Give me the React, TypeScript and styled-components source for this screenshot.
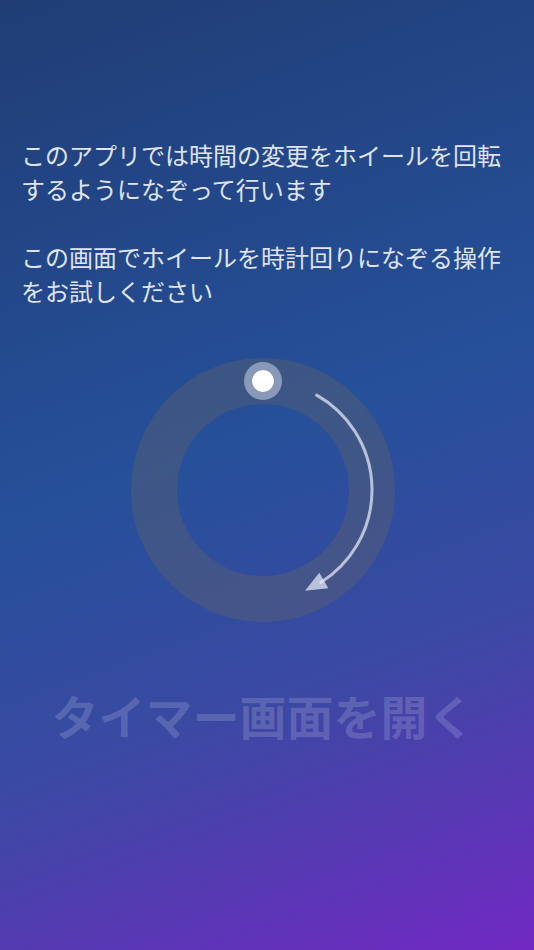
import { createGlobalStyle, styled } from "styled-components";

const GlobalStyle = createGlobalStyle`
  html, body {
    margin: 0;
    padding: 0;
  }
  body {
    font-family: "Noto Sans CJK JP", "Noto Sans", sans-serif;
  }
`;

const Screen = styled.div`
  width: 534px;
  height: 950px;
  box-sizing: border-box;
  padding: 138px 29px 0 21px;
  display: flex;
  flex-direction: column;
  background: linear-gradient(160deg, #203d75 0%, #26509a 46%, #3b49a3 70%, #7128c2 100%);
  overflow: hidden;
`;

const Intro = styled.p<{ $gap?: number }>`
  margin: ${({ $gap }) => ($gap ? `${$gap}px` : "0")} 0 0;
  font-size: 24px;
  line-height: 34px;
  font-weight: 400;
  color: #dfe3f0;
`;

const WheelRow = styled.div`
  display: flex;
  justify-content: center;
  margin-top: 50px;
`;

const Wheel = styled.div`
  position: relative;
  width: 264px;
  height: 264px;
  box-sizing: border-box;
  border-radius: 50%;
  border: 46px solid rgba(100, 100, 100, 0.37);
`;

const Knob = styled.div`
  position: absolute;
  top: -42px;
  left: 50%;
  width: 38px;
  height: 38px;
  margin-left: -19px;
  box-sizing: border-box;
  border-radius: 50%;
  border: 8px solid rgba(200, 210, 230, 0.55);
  background: #ffffff;
  background-clip: padding-box;
`;

const Hint = styled.svg`
  position: absolute;
  top: -46px;
  left: -46px;
  width: 264px;
  height: 264px;
  pointer-events: none;
`;

const OpenTimer = styled.button`
  margin: 65px auto 0;
  padding: 0;
  border: none;
  background: none;
  font-family: "Noto Sans CJK JP", "Noto Sans", sans-serif;
  font-size: 47px;
  line-height: 56px;
  font-weight: 700;
  white-space: nowrap;
  color: rgba(255, 255, 255, 0.16);
  cursor: pointer;
`;

const polar = (deg: number, r: number) => {
  const a = (deg * Math.PI) / 180;
  return { x: 132 + r * Math.sin(a), y: 132 - r * Math.cos(a) };
};

export default function App() {
  const start = polar(29.5, 109);
  const end = polar(148, 109);
  return (
    <>
      <GlobalStyle />
      <Screen>
        <Intro>
          このアプリでは時間の変更をホイールを回転するようになぞって行います
        </Intro>
        <Intro $gap={34}>
          この画面でホイールを時計回りになぞる操作をお試しください
        </Intro>
        <WheelRow>
          <Wheel>
            <Hint viewBox="0 0 264 264">
              <path
                d={`M ${start.x} ${start.y} A 109 109 0 0 1 ${end.x} ${end.y}`}
                fill="none"
                stroke="rgba(225, 230, 245, 0.75)"
                strokeWidth="3"
                strokeLinecap="round"
              />
              <polygon
                points="174,232.7 188.3,214.7 197.3,230.3"
                fill="rgba(225, 230, 245, 0.75)"
              />
            </Hint>
            <Knob />
          </Wheel>
        </WheelRow>
        <OpenTimer>タイマー画面を開く</OpenTimer>
      </Screen>
    </>
  );
}
